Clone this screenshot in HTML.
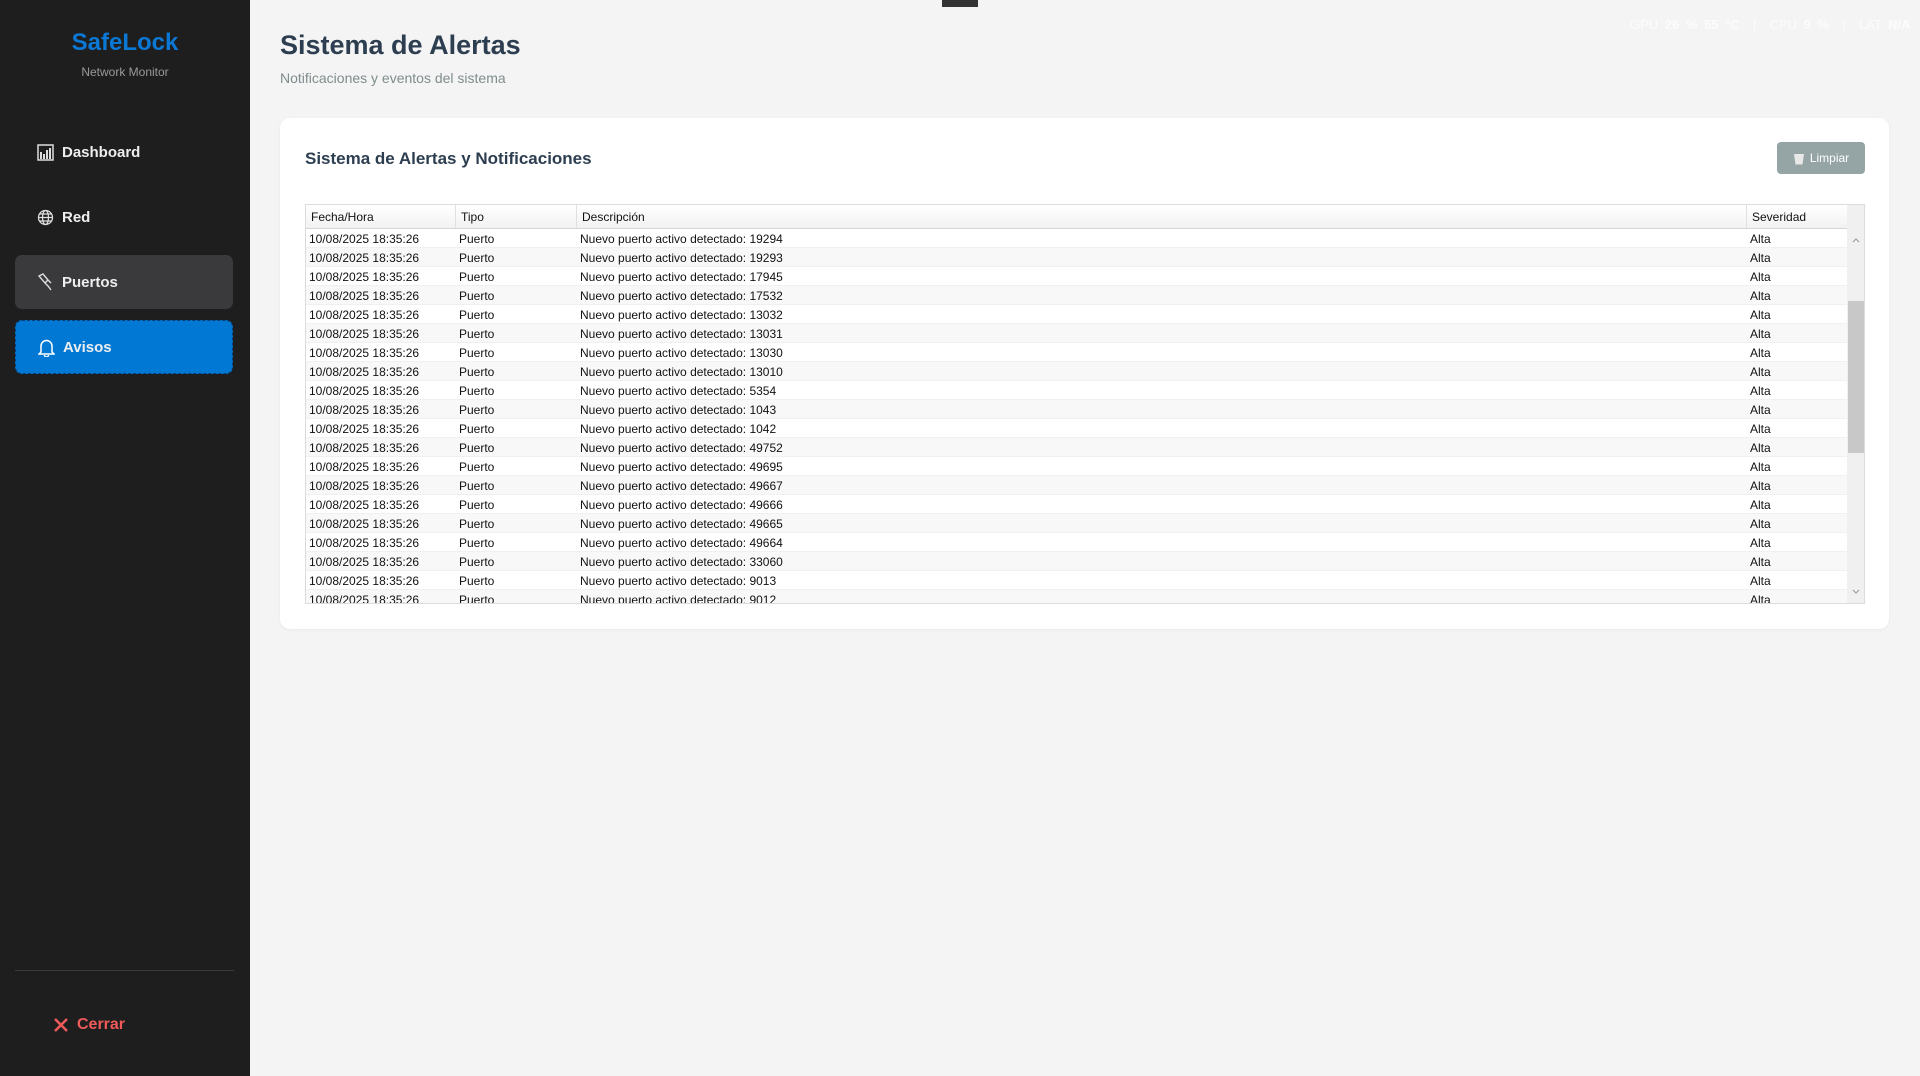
<!DOCTYPE html>
<html><head><meta charset="utf-8"><style>
*{margin:0;padding:0;box-sizing:border-box}
body{width:1920px;height:1076px;background:#f4f4f4;font-family:"Liberation Sans",sans-serif;position:relative;overflow:hidden}
.sb{position:absolute;left:0;top:0;width:250px;height:1076px;background:#1e1e1e}
.logo{position:absolute;left:0;width:250px;top:29px;text-align:center;color:#0a78d4;font-weight:bold;font-size:24px}
.sub{position:absolute;left:0;width:250px;top:65px;text-align:center;color:#9a9a9a;font-size:12px}
.nav{position:absolute;left:15px;width:218px;height:54px;color:#eee;font-size:15px;font-weight:bold;display:flex;align-items:center;padding-left:22px;border-radius:7px}
.nav svg{margin-right:8px}
.sep{position:absolute;left:15px;width:219px;top:970px;height:1px;background:#3a3a3a}
.cerrar{position:absolute;left:53px;top:1016px;color:#f05a5a;font-size:16px;font-weight:bold;display:flex;align-items:center}
h1{position:absolute;left:280px;top:30px;font-size:27px;color:#2c3e50}
.st{position:absolute;left:280px;top:70px;font-size:14px;color:#7f8c8d}
.card{position:absolute;left:280px;top:118px;width:1609px;height:511px;background:#fff;border-radius:10px;box-shadow:0 1px 3px rgba(0,0,0,.05)}
.ch{position:absolute;left:305px;top:149px;font-size:17px;font-weight:bold;color:#2c3e50}
.btn{position:absolute;left:1777px;top:142px;width:88px;height:32px;background:#95a5a6;border-radius:4px;color:#fff;font-size:12px;display:flex;align-items:center;justify-content:center}
.tbl{position:absolute;left:305px;top:204px;width:1560px;height:400px;border:1px solid #dcdcdc;overflow:hidden;background:#fff}
.hdr{position:absolute;left:0;top:0;height:24px;width:1542px;background:linear-gradient(#fff,#f2f2f2);border-bottom:1px solid #d5d5d5;font-size:12px;color:#111}
.hdr div{position:absolute;top:0;height:23px;line-height:25px;padding-left:5px;border-right:1px solid #e0e0e0}
.row{position:absolute;left:0;width:1542px;height:19px;font-size:12px;color:#111;border-bottom:1px solid #f0f0f0}
.row span{position:absolute;top:1px;line-height:19px}
.sc{position:absolute;left:1541px;top:0;width:18px;height:400px;background:#f0f0f0}
.th{position:absolute;left:1px;top:96px;width:16px;height:152px;background:#c8c8c8}
.stats{position:absolute;left:1630px;top:17px;font-size:13px;color:#fcfcfc;word-spacing:3px;white-space:nowrap}
</style></head><body>
<div style="position:absolute;left:942px;top:0;width:36px;height:7px;background:#333"></div>
<div class="stats">GPU <b>26 % 55 °C</b> &nbsp;|&nbsp; CPU <b>9 %</b> &nbsp;|&nbsp; LAT <b>N/A</b></div>
<div class="sb">
<div class="logo">SafeLock</div>
<div class="sub">Network Monitor</div>
<div class="nav" style="top:125px"><svg width="17" height="17" viewBox="0 0 17 17"><rect x="1" y="1" width="15" height="15" fill="none" stroke="#ddd" stroke-width="1.5"/><path d="M4 15V8M7 15V10M10 15V6M13 15V4" stroke="#ddd" stroke-width="2"/></svg>Dashboard</div>
<div class="nav" style="top:190px"><svg width="17" height="17" viewBox="0 0 17 17" fill="none" stroke="#ddd" stroke-width="1.3"><circle cx="8.5" cy="8.5" r="7"/><ellipse cx="8.5" cy="8.5" rx="3" ry="7"/><path d="M1.5 8.5h14M2.5 5h12M2.5 12h12"/></svg>Red</div>
<div class="nav" style="top:255px;background:#3a3a3c"><svg width="17" height="18" viewBox="0 0 17 18" fill="none" stroke="#ddd" stroke-width="1.4"><path d="M2 3l4-2 5 6-3 3zM8 10l3 3 3 4M11 7l3 3"/></svg>Puertos</div>
<div class="nav" style="top:320px;background:#0078d4;border:1px dashed #0a3f75"><svg width="17" height="19" viewBox="0 0 17 19" fill="none" stroke="#fff" stroke-width="1.5"><path d="M3 14V8a5.5 5.5 0 0111 0v6l2 2H1z M6.5 17a2 2 0 004 0"/></svg>Avisos</div>
<div class="sep"></div>
<div class="cerrar"><svg width="16" height="16" viewBox="0 0 16 16" style="margin-right:8px"><path d="M2 2L14 14M14 2L2 14" stroke="#f05a5a" stroke-width="2.5"/></svg>Cerrar</div>
</div>
<h1>Sistema de Alertas</h1>
<div class="st">Notificaciones y eventos del sistema</div>
<div class="card"></div>
<div class="ch">Sistema de Alertas y Notificaciones</div>
<div class="btn"><svg width="12" height="13" viewBox="0 0 12 13" style="margin-right:5px"><path d="M1 2h10l-1.5 10.5h-7z" fill="#e8e8e8"/></svg>Limpiar</div>
<div class="tbl">
<div class="hdr"><div style="left:0;width:150px">Fecha/Hora</div><div style="left:150px;width:121px">Tipo</div><div style="left:271px;width:1170px">Descripción</div><div style="left:1441px;width:101px">Severidad</div></div>
<div style="position:absolute;top:24px;left:0;width:1542px;height:376px">
<div class="row" style="top:0"><span style="left:3px">10/08/2025 18:35:26</span><span style="left:153px">Puerto</span><span style="left:274px">Nuevo puerto activo detectado: 19294</span><span style="left:1444px">Alta</span></div>
<div class="row" style="top:19px;background:#f8f8f8"><span style="left:3px">10/08/2025 18:35:26</span><span style="left:153px">Puerto</span><span style="left:274px">Nuevo puerto activo detectado: 19293</span><span style="left:1444px">Alta</span></div>
<div class="row" style="top:38px"><span style="left:3px">10/08/2025 18:35:26</span><span style="left:153px">Puerto</span><span style="left:274px">Nuevo puerto activo detectado: 17945</span><span style="left:1444px">Alta</span></div>
<div class="row" style="top:57px;background:#f8f8f8"><span style="left:3px">10/08/2025 18:35:26</span><span style="left:153px">Puerto</span><span style="left:274px">Nuevo puerto activo detectado: 17532</span><span style="left:1444px">Alta</span></div>
<div class="row" style="top:76px"><span style="left:3px">10/08/2025 18:35:26</span><span style="left:153px">Puerto</span><span style="left:274px">Nuevo puerto activo detectado: 13032</span><span style="left:1444px">Alta</span></div>
<div class="row" style="top:95px;background:#f8f8f8"><span style="left:3px">10/08/2025 18:35:26</span><span style="left:153px">Puerto</span><span style="left:274px">Nuevo puerto activo detectado: 13031</span><span style="left:1444px">Alta</span></div>
<div class="row" style="top:114px"><span style="left:3px">10/08/2025 18:35:26</span><span style="left:153px">Puerto</span><span style="left:274px">Nuevo puerto activo detectado: 13030</span><span style="left:1444px">Alta</span></div>
<div class="row" style="top:133px;background:#f8f8f8"><span style="left:3px">10/08/2025 18:35:26</span><span style="left:153px">Puerto</span><span style="left:274px">Nuevo puerto activo detectado: 13010</span><span style="left:1444px">Alta</span></div>
<div class="row" style="top:152px"><span style="left:3px">10/08/2025 18:35:26</span><span style="left:153px">Puerto</span><span style="left:274px">Nuevo puerto activo detectado: 5354</span><span style="left:1444px">Alta</span></div>
<div class="row" style="top:171px;background:#f8f8f8"><span style="left:3px">10/08/2025 18:35:26</span><span style="left:153px">Puerto</span><span style="left:274px">Nuevo puerto activo detectado: 1043</span><span style="left:1444px">Alta</span></div>
<div class="row" style="top:190px"><span style="left:3px">10/08/2025 18:35:26</span><span style="left:153px">Puerto</span><span style="left:274px">Nuevo puerto activo detectado: 1042</span><span style="left:1444px">Alta</span></div>
<div class="row" style="top:209px;background:#f8f8f8"><span style="left:3px">10/08/2025 18:35:26</span><span style="left:153px">Puerto</span><span style="left:274px">Nuevo puerto activo detectado: 49752</span><span style="left:1444px">Alta</span></div>
<div class="row" style="top:228px"><span style="left:3px">10/08/2025 18:35:26</span><span style="left:153px">Puerto</span><span style="left:274px">Nuevo puerto activo detectado: 49695</span><span style="left:1444px">Alta</span></div>
<div class="row" style="top:247px;background:#f8f8f8"><span style="left:3px">10/08/2025 18:35:26</span><span style="left:153px">Puerto</span><span style="left:274px">Nuevo puerto activo detectado: 49667</span><span style="left:1444px">Alta</span></div>
<div class="row" style="top:266px"><span style="left:3px">10/08/2025 18:35:26</span><span style="left:153px">Puerto</span><span style="left:274px">Nuevo puerto activo detectado: 49666</span><span style="left:1444px">Alta</span></div>
<div class="row" style="top:285px;background:#f8f8f8"><span style="left:3px">10/08/2025 18:35:26</span><span style="left:153px">Puerto</span><span style="left:274px">Nuevo puerto activo detectado: 49665</span><span style="left:1444px">Alta</span></div>
<div class="row" style="top:304px"><span style="left:3px">10/08/2025 18:35:26</span><span style="left:153px">Puerto</span><span style="left:274px">Nuevo puerto activo detectado: 49664</span><span style="left:1444px">Alta</span></div>
<div class="row" style="top:323px;background:#f8f8f8"><span style="left:3px">10/08/2025 18:35:26</span><span style="left:153px">Puerto</span><span style="left:274px">Nuevo puerto activo detectado: 33060</span><span style="left:1444px">Alta</span></div>
<div class="row" style="top:342px"><span style="left:3px">10/08/2025 18:35:26</span><span style="left:153px">Puerto</span><span style="left:274px">Nuevo puerto activo detectado: 9013</span><span style="left:1444px">Alta</span></div>
<div class="row" style="top:361px;background:#f8f8f8"><span style="left:3px">10/08/2025 18:35:26</span><span style="left:153px">Puerto</span><span style="left:274px">Nuevo puerto activo detectado: 9012</span><span style="left:1444px">Alta</span></div>
</div>
<div class="sc"><svg width="18" height="14" style="position:absolute;top:28px;left:0" viewBox="0 0 18 14"><path d="M6 9l3-3 3 3" stroke="#999" fill="none"/></svg><div class="th"></div><svg width="18" height="14" style="position:absolute;top:380px;left:0" viewBox="0 0 18 14"><path d="M6 5l3 3 3-3" stroke="#999" fill="none"/></svg></div>
</div>
</body></html>
